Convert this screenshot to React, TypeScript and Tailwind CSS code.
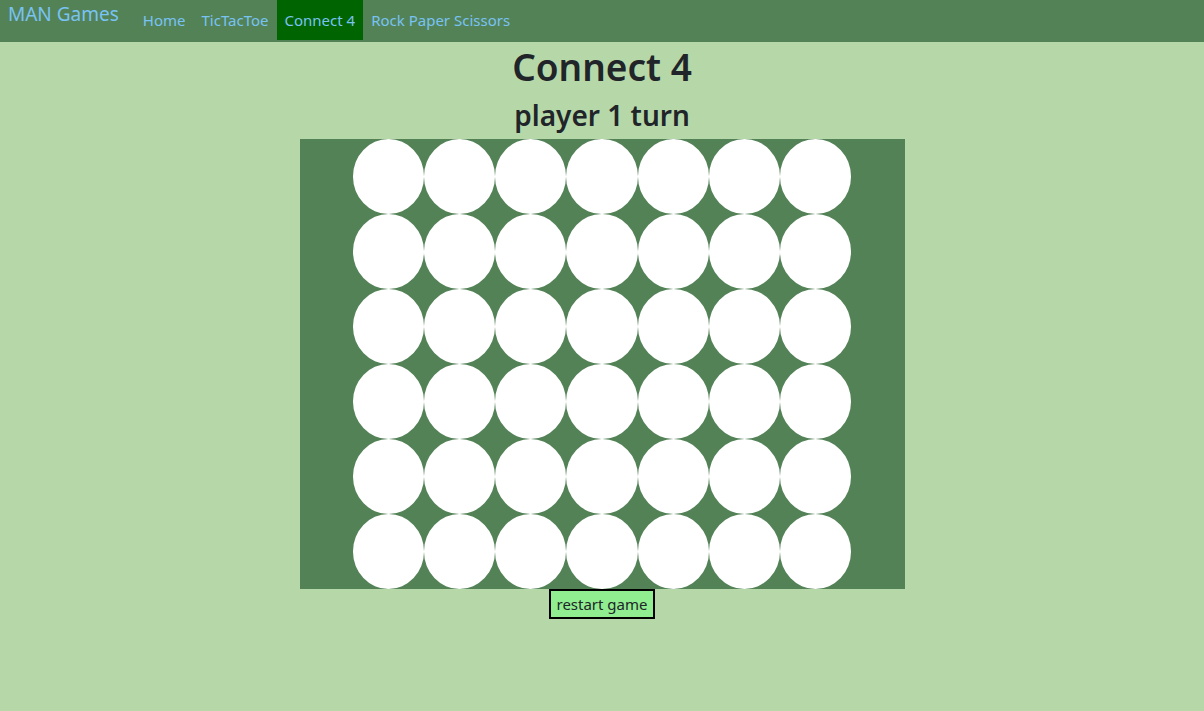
import { useState } from 'react';

const ROWS = 6;
const COLS = 7;

const NAV_LINKS = ['Home', 'TicTacToe', 'Connect 4', 'Rock Paper Scissors'];

export default function App() {
  const [board, setBoard] = useState<number[][]>(() =>
    Array.from({ length: ROWS }, () => Array(COLS).fill(0))
  );
  const [player, setPlayer] = useState(1);

  const drop = (col: number) => {
    const next = board.map((r) => [...r]);
    for (let r = ROWS - 1; r >= 0; r--) {
      if (next[r][col] === 0) {
        next[r][col] = player;
        setBoard(next);
        setPlayer(player === 1 ? 2 : 1);
        return;
      }
    }
  };

  const restart = () => {
    setBoard(Array.from({ length: ROWS }, () => Array(COLS).fill(0)));
    setPlayer(1);
  };

  return (
    <div
      className="min-h-[711px] bg-[#b6d8a8] text-[#212529]"
      style={{ fontFamily: '"Noto Sans", "Open Sans", sans-serif' }}
    >
      {/* Navbar */}
      <nav className="h-[42px] bg-[#538257] flex items-start">
        <span className="ml-2 mr-4 text-[19px] leading-[28px] text-[#79c3f3]">MAN Games</span>
        <ul className="flex">
          {NAV_LINKS.map((link) => (
            <li
              key={link}
              className={`h-10 px-2 flex items-center text-[15px] text-[#79c3f3] ${
                link === 'Connect 4' ? 'bg-[#006400]' : ''
              }`}
            >
              {link}
            </li>
          ))}
        </ul>
      </nav>

      {/* Game */}
      <div className="flex flex-col items-center">
        <h1 className="text-[37px] leading-[46px] font-semibold mt-[2px]">Connect 4</h1>
        <h2 className="text-[28px] leading-[40px] font-semibold mt-[5px] mb-[4px]">player {player} turn</h2>
        <div className="w-[605px] h-[450px] bg-[#538257] flex justify-center">
          <div className="grid grid-cols-7 w-[499px]">
            {board.map((row, r) =>
              row.map((cell, c) => (
                <button
                  key={`${r}-${c}`}
                  onClick={() => drop(c)}
                  className={`h-[75px] rounded-[50%] ${
                    cell === 1 ? 'bg-red-600' : cell === 2 ? 'bg-yellow-400' : 'bg-white'
                  }`}
                />
              ))
            )}
          </div>
        </div>
        <button
          onClick={restart}
          className="h-[30px] px-[5px] bg-[#90ee90] border-2 border-black text-[15px] text-[#212529]"
        >
          restart game
        </button>
      </div>
    </div>
  );
}
